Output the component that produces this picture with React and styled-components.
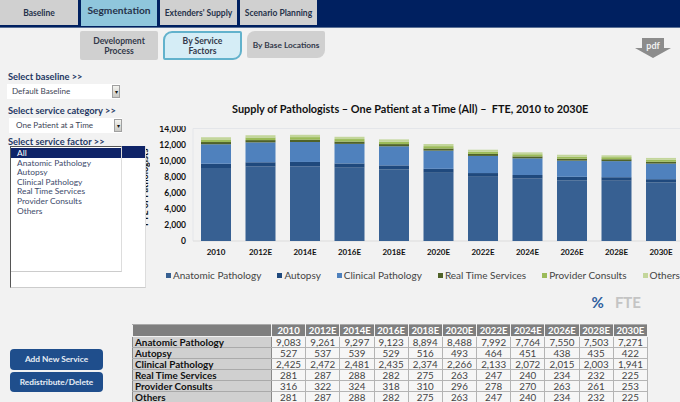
import React from 'react'
import styled, { createGlobalStyle } from 'styled-components'

const GlobalStyle = createGlobalStyle`
  html, body { margin: 0; padding: 0; background: #f2f2f2; }
  #root { width: 680px; height: 402px; overflow: hidden; }
`

const years = ['2010', '2012E', '2014E', '2016E', '2018E', '2020E', '2022E', '2024E', '2026E', '2028E', '2030E']

const series = [
  { name: 'Anatomic Pathology', color: '#376092', values: [9083, 9261, 9297, 9123, 8894, 8488, 7992, 7764, 7550, 7503, 7271] },
  { name: 'Autopsy', color: '#1f497d', values: [527, 537, 539, 529, 516, 493, 464, 451, 438, 435, 422] },
  { name: 'Clinical Pathology', color: '#4f81bd', values: [2425, 2472, 2481, 2435, 2374, 2266, 2133, 2072, 2015, 2003, 1941] },
  { name: 'Real Time Services', color: '#4f6228', values: [281, 287, 288, 282, 275, 263, 247, 240, 234, 232, 225] },
  { name: 'Provider Consults', color: '#9bbb59', values: [316, 322, 324, 318, 310, 296, 278, 270, 263, 261, 253] },
  { name: 'Others', color: '#c3d69b', values: [281, 287, 288, 282, 275, 263, 247, 240, 234, 232, 225] },
]

const Page = styled.div`
  width: 680px;
  height: 402px;
  overflow: hidden;
  background: #f2f2f2;
  font-family: "Lato", "Liberation Sans", sans-serif;
  color: #1f2a44;
`

// ----- top navigation
const NavBar = styled.nav`
  display: flex;
  gap: 3px;
  height: 27px;
  background: #002060;
  border-bottom: 1px solid #5b7196;
`

const NavTab = styled.div`
  width: ${props => props.$width}px;
  height: ${props => (props.$active ? 26 : 25)}px;
  display: flex;
  align-items: center;
  justify-content: center;
  background: ${props => (props.$active ? '#8fc6dc' : '#d0d0d0')};
  font-size: ${props => (props.$active ? 10.2 : 8.5)}px;
  font-weight: 700;
  color: #26324a;
  padding-bottom: ${props => (props.$active ? 6 : 0)}px;
  box-sizing: border-box;
`

const SubBar = styled.div`
  display: flex;
  align-items: flex-start;
  height: 36px;
  padding: 3px 9px 0 80px;
  box-sizing: border-box;
`

const SubTab = styled.div`
  width: ${props => (props.$active ? 79 : 78)}px;
  height: ${props => (props.$short ? 27 : 29)}px;
  margin-left: ${props => props.$gap}px;
  display: flex;
  align-items: center;
  justify-content: center;
  text-align: center;
  box-sizing: border-box;
  font-size: ${props => (props.$short ? 8.3 : 8.6)}px;
  font-weight: 700;
  line-height: 10px;
  color: #33394a;
  background: ${props => (props.$active ? '#d5edf6' : '#d0d0d0')};
  border-radius: ${props => (props.$active ? '9px 2px 9px 2px' : '2px')};
  border: ${props => (props.$active ? '2px solid #62b2cc' : 'none')};
  ${props => props.$short && 'border-radius: 8px 2px 8px 2px;'}
`

const PdfIcon = styled.svg`
  margin: 7px 0 0 auto;
  display: block;
`

// ----- body
const Body = styled.div`
  display: grid;
  grid-template-columns: 132px 548px;
  height: 338px;
`

const SidePanel = styled.aside`
  position: relative;
  display: flex;
  flex-direction: column;
  padding: 7px 0 0 8px;
`

const FieldLabel = styled.label`
  font-size: 9.3px;
  font-weight: 700;
  line-height: 11px;
  color: #1f3864;
  white-space: nowrap;
`

const Select = styled.div`
  display: flex;
  justify-content: space-between;
  flex: none;
  width: 113px;
  height: 15px;
  margin: 2px 0 ${props => props.$after}px ${props => props.$shift}px;
  padding-left: ${props => props.$indent}px;
  box-sizing: border-box;
  background: #fff;
  font-size: 8.1px;
  line-height: 14px;
  color: #404656;
`

const SelectArrow = styled.span`
  width: 8px;
  height: 13px;
  margin-top: 1px;
  background: linear-gradient(#f4f4f0, #c8c8c4);
  border: 1px solid #a0a0a0;
  box-sizing: border-box;
  font-size: 6px;
  line-height: 12px;
  text-align: center;
  color: #111;
`

const ListFrame = styled.div`
  position: relative;
  flex: none;
  width: 136px;
  height: 142px;
  margin: -1px 0 0 2px;
  background: #fff;
  border-left: 1px solid #555;
  border-right: 1px solid #ddd;
  border-bottom: 1px solid #ccc;
  box-sizing: border-box;
`

const FrameStrip = styled.div`
  height: 12px;
  background: #0f2468;
`

const ServiceList = styled.ul`
  position: absolute;
  top: 0;
  left: 0;
  width: 111px;
  height: 126px;
  margin: 0;
  padding: 1px 0 0;
  list-style: none;
  box-sizing: border-box;
  background: #fff;
  border-right: 1px solid #ddd;
  border-bottom: 1px solid #ccc;
  border-top: 1px solid #555;
`

const ServiceItem = styled.li`
  height: ${props => (props.$selected ? 9.5 : 9.65)}px;
  padding-left: 6px;
  font-size: 8.4px;
  line-height: 10px;
  white-space: nowrap;
  color: ${props => (props.$selected ? '#fff' : '#3d4a6b')};
  background: ${props => (props.$selected ? '#0f2468' : 'transparent')};
`

const AxisTitle = styled.span`
  position: absolute;
  left: 146px;
  top: 84px;
  width: 4px;
  height: 78px;
  overflow: hidden;
`

const AxisTitleText = styled.span`
  display: block;
  height: 78px;
  width: 10px;
  margin-left: -6px;
  font-size: 9px;
  font-weight: 700;
  line-height: 10px;
  color: #111;
  white-space: nowrap;
  writing-mode: vertical-rl;
  transform: rotate(180deg);
`

const ButtonStack = styled.div`
  display: flex;
  flex-direction: column;
  gap: 2px;
  margin: 61px 0 0 2px;
`

const ActionButton = styled.button`
  width: 93px;
  height: 20.5px;
  padding: 0;
  border: none;
  border-radius: 4px;
  background: #1f4e8c;
  color: #e8eef6;
  font-family: inherit;
  font-size: 8.3px;
  font-weight: 700;
`

// ----- chart side
const Main = styled.main`
  display: flex;
  flex-direction: column;
  min-width: 0;
`

const ChartTitle = styled.h2`
  margin: 37px 0 0;
  padding-left: 100px;
  height: 15px;
  font-size: 10.9px;
  font-weight: 700;
  line-height: 15px;
  color: #111;
  white-space: pre;
`

const ChartSvg = styled.svg`
  display: block;
  flex: none;
  margin-top: 10px;
`

const Legend = styled.div`
  display: flex;
  gap: 16px;
  margin: 14px 0 0 34px;
  font-size: 10px;
  line-height: 12px;
  color: #444;
  white-space: nowrap;
`

const LegendItem = styled.span`
  display: flex;
  align-items: center;
  gap: 2px;
`

const Swatch = styled.i`
  width: 5px;
  height: 5px;
  background: ${props => props.$color};
`

const UnitToggle = styled.div`
  display: flex;
  justify-content: flex-end;
  gap: 11px;
  height: 18px;
  margin: 13px 39px 0 0;
  font-size: 15px;
  font-weight: 700;
  line-height: 16px;
`

const UnitOption = styled.span`
  color: ${props => (props.$active ? '#2f5f9e' : '#c4c4c4')};
`

const DataTable = styled.table`
  width: 516px;
  margin-top: 12px;
  border-collapse: collapse;
  table-layout: fixed;
`

const HeaderCell = styled.th`
  height: 11px;
  padding: 0;
  background: #7f7f7f;
  border: 1px solid #f2f2f2;
  border-top: 1px solid #aaa;
  color: #fff;
  font-weight: 700;
  font-size: 9.6px;
  line-height: 10px;
  text-align: center;
`

const RowName = styled.th`
  height: 10px;
  padding: 0 0 0 2px;
  background: #d0d0d0;
  border: 1px solid #8a8a8a;
  border-bottom-color: #aaa;
  color: #111;
  font-size: 9.9px;
  line-height: 10px;
  font-weight: 700;
  text-align: left;
  white-space: nowrap;
`

const ValueCell = styled.td`
  height: 10px;
  padding: 0;
  background: #f6f6f6;
  border: 1px solid #b4b4b4;
  color: #444;
  font-size: 9.8px;
  line-height: 10px;
  text-align: center;
`

const chartH = 129
const plotBottom = 115
const pxPerUnit = 112.5 / 14000
const ticks = [0, 2000, 4000, 6000, 8000, 10000, 12000, 14000]
const fmt = n => n.toLocaleString('en-US')

function StackedChart() {
  return (
    <ChartSvg width="548" height={chartH} viewBox={`0 0 548 ${chartH}`}>
      <line x1="61" x2="548" y1={plotBottom - 112.5} y2={plotBottom - 112.5} stroke="#e4e6ea" />
      <line x1="61" x2="61" y1={plotBottom - 112.5} y2={plotBottom} stroke="#e4e6ea" />
      <line x1="61" x2="548" y1={plotBottom} y2={plotBottom} stroke="#dcdcdc" />
      {ticks.map(t => (
        <text key={t} x="54" y={plotBottom - t * pxPerUnit + 3} textAnchor="end" fontSize="8.5" fontWeight="700" fill="#111">
          {fmt(t)}
        </text>
      ))}
      {years.map((year, i) => {
        const x = 69 + i * 44.5
        let base = plotBottom
        return (
          <g key={year}>
            {series.map(s => {
              const h = s.values[i] * pxPerUnit
              base -= h
              return <rect key={s.name} x={x} y={base} width="30" height={h} fill={s.color} />
            })}
            <text x={x + 15} y={plotBottom + 14} textAnchor="middle" fontSize="8" fontWeight="700" fill="#111">
              {year}
            </text>
          </g>
        )
      })}
    </ChartSvg>
  )
}

export default function App() {
  return (
    <Page>
      <GlobalStyle />
      <NavBar>
        <NavTab $width={78}>Baseline</NavTab>
        <NavTab $width={76} $active>Segmentation</NavTab>
        <NavTab $width={77}>Extenders' Supply</NavTab>
        <NavTab $width={77}>Scenario Planning</NavTab>
      </NavBar>
      <SubBar>
        <SubTab $gap={0}>Development<br />Process</SubTab>
        <SubTab $gap={5} $active>By Service<br />Factors</SubTab>
        <SubTab $gap={5} $short>By Base Locations</SubTab>
        <PdfIcon width="36" height="20" viewBox="0 0 36 20">
          <path d="M7 0h22v10h7L18 20 0 10h7z" fill="#8c8c8c" />
          <text x="18" y="11" textAnchor="middle" fontSize="9" fontWeight="700" fill="#f2f2f2">pdf</text>
        </PdfIcon>
      </SubBar>
      <Body>
        <SidePanel>
          <FieldLabel>Select baseline &gt;&gt;</FieldLabel>
          <Select $indent={5} $shift={-1} $after={6}>Default Baseline<SelectArrow>▾</SelectArrow></Select>
          <FieldLabel>Select service category &gt;&gt;</FieldLabel>
          <Select $indent={7} $shift={1} $after={3}>One Patient at a Time<SelectArrow>▾</SelectArrow></Select>
          <FieldLabel>Select service factor &gt;&gt;</FieldLabel>
          <ListFrame>
            <FrameStrip />
            <ServiceList>
              {['All', 'Anatomic Pathology', 'Autopsy', 'Clinical Pathology', 'Real Time Services', 'Provider Consults', 'Others'].map((item, i) => (
                <ServiceItem key={item} $selected={i === 0}>{item}</ServiceItem>
              ))}
            </ServiceList>
          </ListFrame>
          <ButtonStack>
            <ActionButton>Add New Service</ActionButton>
            <ActionButton>Redistribute/Delete</ActionButton>
          </ButtonStack>
          <AxisTitle><AxisTitleText>FTE of Pathologists</AxisTitleText></AxisTitle>
        </SidePanel>
        <Main>
          <ChartTitle>Supply of Pathologists – One Patient at a Time (All) –  FTE, 2010 to 2030E</ChartTitle>
          <StackedChart />
          <Legend>
            {series.map(s => (
              <LegendItem key={s.name}><Swatch $color={s.color} />{s.name}</LegendItem>
            ))}
          </Legend>
          <UnitToggle>
            <UnitOption $active>%</UnitOption>
            <UnitOption>FTE</UnitOption>
          </UnitToggle>
          <DataTable>
            <colgroup>
              <col style={{ width: 139 }} />
              {years.map(y => <col key={y} />)}
            </colgroup>
            <thead>
              <tr>
                <HeaderCell />
                {years.map(y => <HeaderCell key={y}>{y}</HeaderCell>)}
              </tr>
            </thead>
            <tbody>
              {series.map(s => (
                <tr key={s.name}>
                  <RowName>{s.name}</RowName>
                  {s.values.map((v, i) => <ValueCell key={years[i]}>{fmt(v)}</ValueCell>)}
                </tr>
              ))}
            </tbody>
          </DataTable>
        </Main>
      </Body>
    </Page>
  )
}
